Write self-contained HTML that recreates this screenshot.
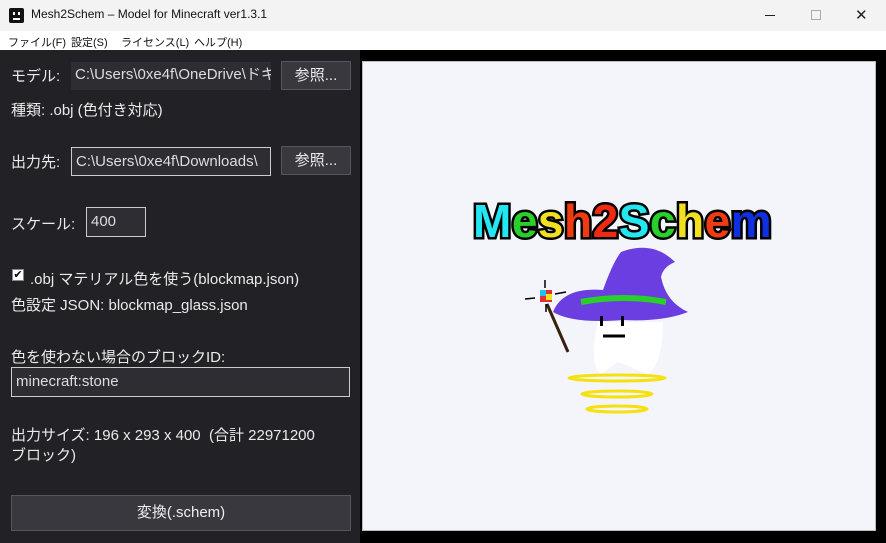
<!DOCTYPE html>
<html><head><meta charset="utf-8"><style>
*{margin:0;padding:0;box-sizing:border-box}
body{width:886px;height:543px;overflow:hidden;background:#000;font-family:"Liberation Sans","Noto Sans CJK JP",sans-serif;position:relative}
.t{position:absolute;white-space:nowrap}
#title{position:absolute;left:0;top:0;width:886px;height:31px;background:#f3f3f3}
#menu{position:absolute;left:0;top:31px;width:886px;height:19px;background:#fff;font-size:11px;color:#111}
#left{position:absolute;left:0;top:50px;width:360px;height:493px;background:#222226}
.lt{color:#eaeaea;font-size:15px}
.box{position:absolute;background:#2d2d33;color:#ddd;font-size:15px;padding:0 0 0 4px;overflow:hidden;white-space:nowrap}
.btn{position:absolute;background:#38383e;border:1px solid #55555b;color:#eee;font-size:15px;text-align:center}
#prev{position:absolute;left:362px;top:61px;width:514px;height:470px;background:#f4f5fa;border:1px solid #bbb}
</style></head><body>
<div id="title">
<div style="position:absolute;left:9px;top:8px;width:15px;height:15px;background:#111;border-radius:2px"><div style="position:absolute;left:4px;top:4px;width:2px;height:3px;background:#fff"></div><div style="position:absolute;left:9px;top:4px;width:2px;height:3px;background:#fff"></div><div style="position:absolute;left:4px;top:10px;width:7px;height:2px;background:#fff"></div></div>
<div class="t" style="left:31px;top:7px;font-size:12px;color:#111">Mesh2Schem – Model for Minecraft ver1.3.1</div>
<div style="position:absolute;left:765px;top:15px;width:10px;height:1px;background:#222"></div>
<div style="position:absolute;left:811px;top:10px;width:10px;height:10px;border:1px solid #aaa"></div>
<div class="t" style="left:855px;top:6px;font-size:15px;color:#222">✕</div>
</div>
<div id="menu">
<span class="t" style="left:8px;top:3px">ファイル(F)</span>
<span class="t" style="left:71px;top:3px">設定(S)</span>
<span class="t" style="left:121px;top:3px">ライセンス(L)</span>
<span class="t" style="left:194px;top:3px">ヘルプ(H)</span>
</div>
<div id="left">
<div class="t lt" style="left:11px;top:15px">モデル:</div>
<div class="box" style="left:71px;top:12px;width:200px;height:28px;line-height:26px">C:\Users\0xe4f\OneDrive\ドキュメント</div>
<div class="btn" style="left:281px;top:11px;width:70px;height:29px;line-height:27px">参照...</div>
<div class="t lt" style="left:11px;top:49px">種類: .obj (色付き対応)</div>
<div class="t lt" style="left:11px;top:101px">出力先:</div>
<div class="box" style="left:71px;top:97px;width:200px;height:29px;border:1px solid #ccc;line-height:27px">C:\Users\0xe4f\Downloads\</div>
<div class="btn" style="left:281px;top:96px;width:70px;height:29px;line-height:27px">参照...</div>
<div class="t lt" style="left:11px;top:163px">スケール:</div>
<div class="box" style="left:86px;top:157px;width:60px;height:30px;border:1px solid #ccc;line-height:28px">400</div>
<div style="position:absolute;left:12px;top:219px;width:12px;height:12px;background:#fff;border:1px solid #888;font-size:11px;line-height:10px;text-align:center;color:#000">✔</div>
<div class="t lt" style="left:30px;top:218px">.obj マテリアル色を使う(blockmap.json)</div>
<div class="t lt" style="left:11px;top:244px">色設定 JSON: blockmap_glass.json</div>
<div class="t lt" style="left:11px;top:296px">色を使わない場合のブロックID:</div>
<div class="box" style="left:11px;top:317px;width:339px;height:30px;border:1px solid #ccc;line-height:28px">minecraft:stone</div>
<div class="t lt" style="left:11px;top:374px">出力サイズ: 196 x 293 x 400 &nbsp;(合計 22971200</div>
<div class="t lt" style="left:11px;top:394px">ブロック)</div>
<div class="btn" style="left:11px;top:445px;width:340px;height:36px;line-height:34px">変換(.schem)</div>
</div>
<div id="prev">
<svg width="514" height="470" style="position:absolute;left:0;top:0">
<g font-family="Liberation Sans" font-weight="bold" font-size="46" stroke="#000" stroke-width="5" paint-order="stroke" letter-spacing="0.5">
<text x="110" y="175"><tspan fill="#22e6f0">M</tspan><tspan fill="#2ad02a">e</tspan><tspan fill="#f0e020">s</tspan><tspan fill="#f03a10">h</tspan><tspan fill="#f02a10">2</tspan><tspan fill="#22e6f0">S</tspan><tspan fill="#2ad02a">c</tspan><tspan fill="#f0e020">h</tspan><tspan fill="#f03a10">e</tspan><tspan fill="#1030e0">m</tspan></text>
</g>
<path d="M235 260 Q225 300 238 312 L255 300 L285 312 Q300 300 300 260 Z" fill="#fff"/>
<path d="M190 250 Q200 225 240 228 Q250 200 258 190 Q290 178 312 200 Q300 205 298 215 Q303 240 325 250 Q300 260 260 258 Q210 262 190 250Z" fill="#6a3ee0"/>
<path d="M218 240 Q260 232 303 240" stroke="#2ad02a" stroke-width="6" fill="none"/>
<rect x="237" y="254" width="3" height="10" fill="#000"/><rect x="258" y="254" width="3" height="10" fill="#000"/>
<path d="M240 274 L262 274" stroke="#000" stroke-width="3"/>
<path d="M184 242 L205 290" stroke="#3a2010" stroke-width="3"/>
<rect x="177" y="228" width="12" height="12" fill="#e03030"/><rect x="177" y="228" width="6" height="6" fill="#22c0f0"/><rect x="183" y="232" width="6" height="6" fill="#f0e020"/>
<path d="M162 237 L172 236 M192 232 L203 230 M182 218 L182 226 M183 242 L183 250" stroke="#000" stroke-width="1.5"/>
<g fill="none" stroke="#f5e010" stroke-width="3">
<ellipse cx="254" cy="316" rx="48" ry="3"/><ellipse cx="254" cy="332" rx="35" ry="3"/><ellipse cx="254" cy="347" rx="30" ry="3"/>
</g>
</svg>
</div>
</body></html>
